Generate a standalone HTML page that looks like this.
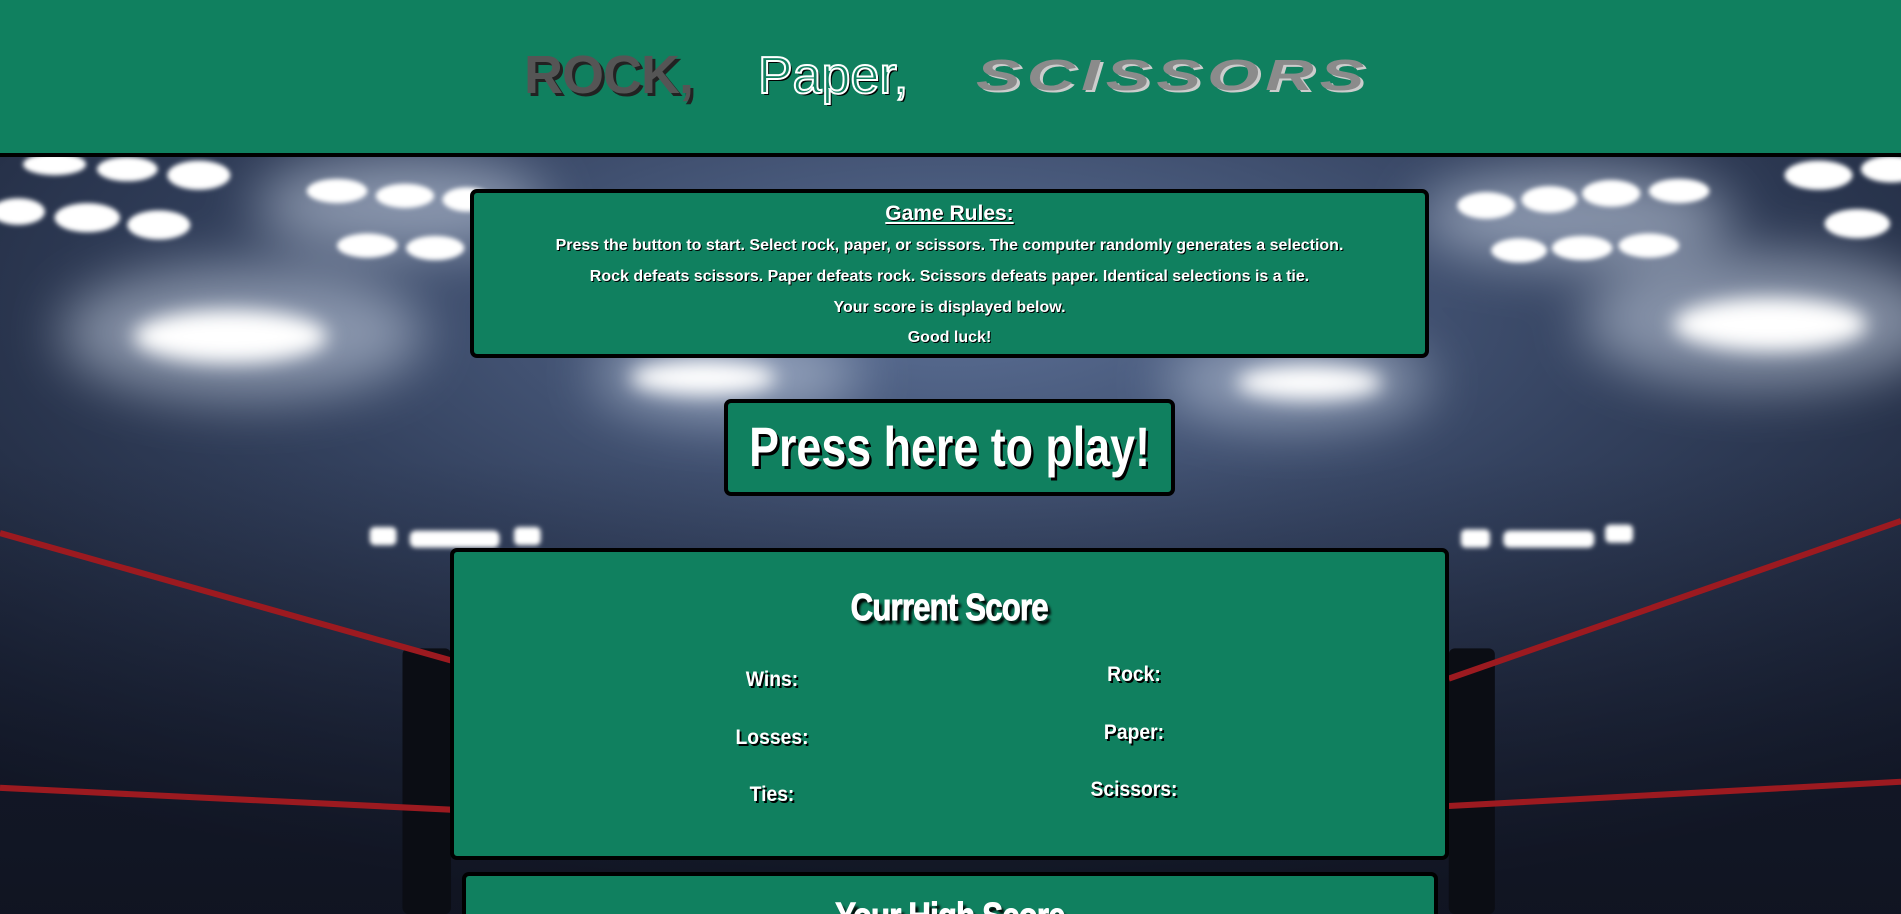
<!DOCTYPE html>
<html style="overflow:hidden;height:914px"><head><meta charset="utf-8"><style>
*{margin:0;padding:0;box-sizing:border-box}
body{width:1901px;height:914px;overflow:hidden;position:relative;background:#1b2438;font-family:"Liberation Sans",sans-serif;color:#fff}
header{position:absolute;left:0;top:0;width:1901px;height:157px;background:#10805f;border-bottom:4px solid #000;z-index:2}
.t{position:absolute;white-space:nowrap;line-height:1}
.rock{left:524px;top:48px;font-weight:900;font-size:54px;color:#555;letter-spacing:-1px;text-shadow:3px 3px 0 #222}
.paper{left:758px;top:50px;font-size:52px;color:#10805f;-webkit-text-stroke:2px #fff;text-shadow:2px 2px 0 #000}
.sci{left:976px;top:54px;font-weight:bold;font-style:italic;font-size:44px;color:#8b8b8b;letter-spacing:4px;text-shadow:2px 2px 0 #ccc;transform:scaleX(1.52);transform-origin:left}
.bg{position:absolute;left:0;top:157px;width:1901px;height:757px}
.box{position:absolute;background:#10805f;border:4px solid #000;border-radius:7px;text-align:center;font-weight:bold;text-shadow:1px 1px 0 #000;white-space:nowrap}
.c{display:inline-block}
.rules{left:470px;top:189px;width:959px;height:169px}
.rules h3{font-size:21px;text-decoration:underline;margin-top:10px;line-height:22px}
.rules p{font-size:16px;line-height:31px}
.btn{left:724px;top:399px;width:451px;height:97px;font-size:56px;line-height:88px;text-shadow:3px 3px 0 #000;display:flex;justify-content:center}
.btn .c{transform:scaleX(0.8);flex:none}
.score{left:450px;top:548px;width:999px;height:312px}
.score h2,.high h2{font-size:38px;font-weight:900;letter-spacing:-1px;text-shadow:4px 4px 3px #000;-webkit-text-stroke:1px #fff;position:absolute;left:0;right:0;top:35px}
h2 .c{transform:scaleX(0.82)}
.lab{position:absolute;font-size:21px;transform:translateX(-50%) scaleX(0.92);text-shadow:2px 2px 0 #000}
.high{left:462px;top:872px;width:976px;height:42px;border-bottom:none;border-radius:7px 7px 0 0}
</style></head><body>
<header>
<div class="t rock">ROCK,</div>
<div class="t paper">Paper,</div>
<div class="t sci">SCISSORS</div>
</header>
<svg class="bg" viewBox="0 130 1568 624" preserveAspectRatio="none">
<defs>
<radialGradient id="base" cx="50%" cy="20%" r="80%"><stop offset="0" stop-color="#5b6f95"/><stop offset="0.45" stop-color="#34425f"/><stop offset="1" stop-color="#121828"/></radialGradient>
<linearGradient id="dk" x1="0" y1="0" x2="0" y2="1"><stop offset="0" stop-color="#141a2c" stop-opacity="0"/><stop offset="1" stop-color="#10131f" stop-opacity="0.7"/></linearGradient>
<filter id="b2"><feGaussianBlur stdDeviation="2"/></filter>
<filter id="b20" x="-50%" y="-50%" width="200%" height="200%"><feGaussianBlur stdDeviation="22"/></filter>
<filter id="b8" x="-50%" y="-50%" width="200%" height="200%"><feGaussianBlur stdDeviation="8"/></filter>
</defs>
<rect x="0" y="130" width="1568" height="624" fill="url(#base)"/>
<rect x="0" y="380" width="1568" height="374" fill="url(#dk)"/>
<g fill="#d8e2f2" opacity="0.5" filter="url(#b20)">
<ellipse cx="200" cy="275" rx="150" ry="55"/><ellipse cx="1455" cy="265" rx="150" ry="55"/>
<ellipse cx="600" cy="310" rx="110" ry="35"/><ellipse cx="1070" cy="315" rx="110" ry="35"/>
<ellipse cx="330" cy="170" rx="120" ry="40"/><ellipse cx="1300" cy="180" rx="130" ry="40"/>
</g>
<g fill="#fff" filter="url(#b8)">
<ellipse cx="190" cy="278" rx="80" ry="22"/><ellipse cx="1460" cy="268" rx="80" ry="22"/>
<ellipse cx="580" cy="312" rx="60" ry="14"/><ellipse cx="1080" cy="316" rx="60" ry="14"/>
</g>
<g fill="#fff" filter="url(#b2)">
<ellipse cx="45" cy="136" rx="26" ry="9"/><ellipse cx="105" cy="140" rx="25" ry="10"/><ellipse cx="164" cy="145" rx="26" ry="12"/>
<ellipse cx="15" cy="175" rx="22" ry="11"/><ellipse cx="72" cy="180" rx="27" ry="12"/><ellipse cx="131" cy="186" rx="26" ry="12"/>
<ellipse cx="278" cy="158" rx="25" ry="10"/><ellipse cx="334" cy="162" rx="24" ry="10"/><ellipse cx="385" cy="165" rx="20" ry="10"/>
<ellipse cx="303" cy="203" rx="25" ry="10"/><ellipse cx="359" cy="205" rx="24" ry="10"/>
<ellipse cx="1226" cy="170" rx="24" ry="11"/><ellipse cx="1278" cy="165" rx="23" ry="11"/><ellipse cx="1329" cy="160" rx="24" ry="11"/><ellipse cx="1385" cy="158" rx="25" ry="10"/>
<ellipse cx="1253" cy="207" rx="23" ry="10"/><ellipse cx="1305" cy="205" rx="25" ry="10"/><ellipse cx="1360" cy="203" rx="25" ry="10"/>
<ellipse cx="1500" cy="145" rx="28" ry="12"/><ellipse cx="1560" cy="140" rx="25" ry="11"/><ellipse cx="1532" cy="185" rx="27" ry="12"/>
<rect x="305" y="435" width="22" height="15" rx="4"/><rect x="338" y="438" width="74" height="14" rx="5"/><rect x="424" y="435" width="22" height="15" rx="4"/>
<rect x="1205" y="437" width="24" height="15" rx="4"/><rect x="1240" y="438" width="75" height="14" rx="5"/><rect x="1324" y="433" width="23" height="15" rx="4"/>
</g>
<rect x="332" y="535" width="40" height="219" rx="5" fill="#0b0d14"/>
<rect x="1195" y="535" width="38" height="219" rx="5" fill="#0b0d14"/>
<g stroke="#9c1a20" stroke-width="5" fill="none">
<path d="M0 440 L372 545"/><path d="M0 650 L372 668"/>
<path d="M1195 560 L1568 430"/><path d="M1195 665 L1568 645"/>
</g>
</svg>
<div class="box rules">
<h3>Game Rules:</h3>
<p style="margin-top:5px">Press the button to start. Select rock, paper, or scissors. The computer randomly generates a selection.</p>
<p>Rock defeats scissors. Paper defeats rock. Scissors defeats paper. Identical selections is a tie.</p>
<p>Your score is displayed below.</p>
<p style="line-height:29px">Good luck!</p>
</div>
<div class="box btn"><span class="c">Press here to play!</span></div>
<div class="box score">
<h2><span class="c">Current Score</span></h2>
<div class="lab" style="left:318px;top:116px">Wins:</div>
<div class="lab" style="left:318px;top:174px">Losses:</div>
<div class="lab" style="left:318px;top:231px">Ties:</div>
<div class="lab" style="left:680px;top:111px">Rock:</div>
<div class="lab" style="left:680px;top:169px">Paper:</div>
<div class="lab" style="left:680px;top:226px">Scissors:</div>
</div>
<div class="box high"><h2 style="top:20px"><span class="c">Your High Score</span></h2></div>
</body></html>
